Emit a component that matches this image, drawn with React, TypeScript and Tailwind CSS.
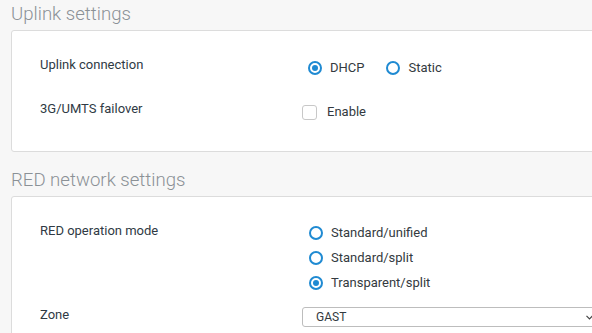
import React from "react";

function Radio({ label, checked }: { label: string; checked?: boolean }) {
  return (
    <div className="flex items-center h-[16px]">
      <span className="flex items-center justify-center w-[14px] h-[14px] rounded-full border-2 border-[#1f8ad2] bg-white">
        {checked && <span className="block w-[6px] h-[6px] rounded-full bg-[#1f8ad2]" />}
      </span>
      <span className="ml-[8px] text-[13px] leading-[16px] text-[#333a40]">{label}</span>
    </div>
  );
}

export default function App() {
  return (
    <div
      className="w-[592px] h-[333px] overflow-hidden bg-[#f7f7f7]"
      style={{ fontFamily: "Roboto, 'Open Sans', sans-serif" }}
    >
      <div className="h-[30px] pl-[11px] text-[18.6px] leading-[28px] text-[#8b9196] font-light">
        Uplink settings
      </div>
      <div className="ml-[11px] w-[600px] h-[122px] bg-white border border-[#dcdcdc] rounded-[3px] pt-[26px] pl-[28px]">
        <div className="flex h-[44px]">
          <div className="w-[262px] text-[13px] leading-[16px] text-[#2f3a44]">Uplink connection</div>
          <div className="flex mt-[3px] ml-[6px] gap-[22px]">
            <Radio label="DHCP" checked />
            <Radio label="Static" />
          </div>
        </div>
        <div className="flex">
          <div className="w-[262px] text-[13px] leading-[16px] text-[#2f3a44]">3G/UMTS failover</div>
          <div className="flex items-center mt-[3px] h-[16px]">
            <span className="block w-[15px] h-[15px] rounded-[3px] border-[1.5px] border-[#c8c8c8] bg-white" />
            <span className="ml-[10px] text-[13px] leading-[16px] text-[#333a40]">Enable</span>
          </div>
        </div>
      </div>
      <div className="h-[44px] pl-[11px] pt-[14px] text-[18.6px] leading-[28px] text-[#8b9196] font-light">
        RED network settings
      </div>
      <div className="ml-[11px] w-[600px] h-[160px] bg-white border border-[#dcdcdc] rounded-[3px] pt-[26px] pl-[28px]">
        <div className="flex h-[84px]">
          <div className="w-[262px] text-[13px] leading-[16px] text-[#2f3a44]">RED operation mode</div>
          <div className="flex flex-col mt-[2px] ml-[7px] gap-[9px]">
            <Radio label="Standard/unified" />
            <Radio label="Standard/split" />
            <Radio label="Transparent/split" checked />
          </div>
        </div>
        <div className="flex">
          <div className="w-[262px] text-[13px] leading-[16px] text-[#2f3a44]">Zone</div>
          <div className="flex items-center justify-between w-[300px] h-[20px] border border-[#bdbdbd] rounded-[3px] bg-white pl-[13px] pr-[8px]">
            <span className="text-[12px] leading-[16px] text-[#333a40]">GAST</span>
            <svg width="7" height="5" viewBox="0 0 7 5" className="mt-[1px]">
              <path d="M0.5 0.8 L3.5 3.8 L6.5 0.8" fill="none" stroke="#444" strokeWidth="1.2" />
            </svg>
          </div>
        </div>
      </div>
    </div>
  );
}
